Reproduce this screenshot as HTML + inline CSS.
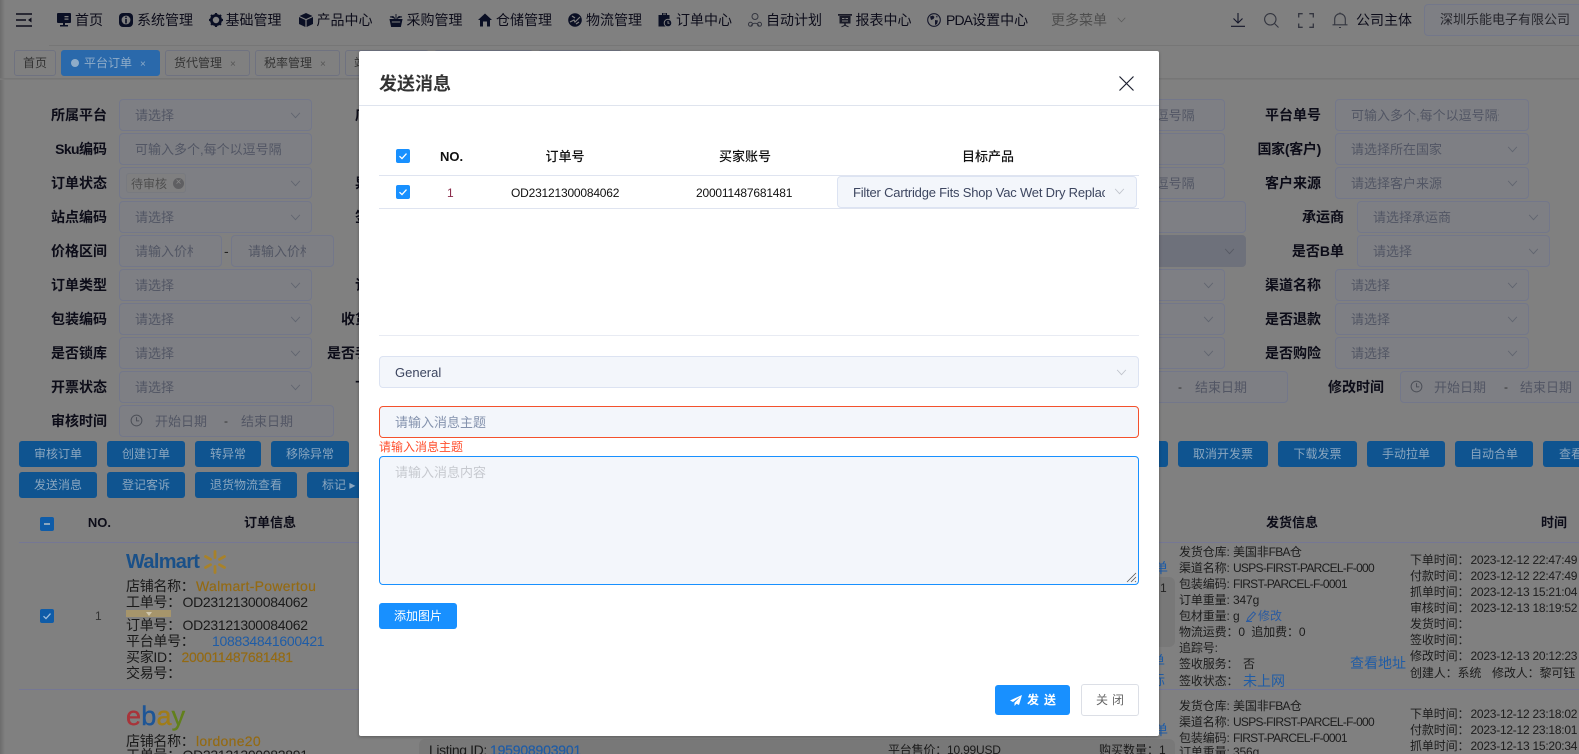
<!DOCTYPE html>
<html lang="zh-CN"><head><meta charset="utf-8"><title>发送消息</title>
<style>
html,body{margin:0;padding:0;width:1579px;height:754px;overflow:hidden;background:#808080}
body{position:relative;font-family:"Liberation Sans","Noto Sans CJK SC",sans-serif;font-size:14px;color:#111}
.t{position:absolute;white-space:nowrap;line-height:20px;height:20px}
.n{color:#0c0c1a;font-size:14px}
.ic{position:absolute;overflow:visible}
.i{position:absolute;box-sizing:border-box;height:32px;border:1px solid #73778a;border-radius:4px;background:#7e7f84}
.l{position:absolute;white-space:nowrap;line-height:20px;font-weight:700;color:#0c0c18;text-align:right;width:100px}
.p{position:absolute;white-space:nowrap;line-height:20px;font-size:13px;color:#525664;overflow:hidden;margin-top:1px}
.b{position:absolute;box-sizing:border-box;height:26px;line-height:26px;background:#0f5490;border-radius:3px;color:#8aa6bf;font-size:12px;text-align:center;white-space:nowrap;overflow:hidden}
.tab{position:absolute;box-sizing:border-box;top:50px;height:26px;line-height:24px;border:1px solid #6f7280;border-radius:3px;font-size:12px;color:#333;white-space:nowrap;overflow:hidden}
.x{position:absolute;top:2px;font-size:10px;color:#555}
.s{font-size:12px;letter-spacing:-.12px;color:#1c1c1c}
.v{letter-spacing:-.7px}
.d{position:absolute;left:60.500px;letter-spacing:-.25px}
.o{font-size:14px;letter-spacing:-.3px;color:#1a1a1a}
.g{color:#946a12;-webkit-text-stroke:.15px #946a12}.u{color:#1f5ca6}
#m{position:absolute;left:359px;top:51px;width:800px;height:685px;background:#fff;border-radius:2px;z-index:5;box-shadow:0 1px 3px rgba(0,0,0,.3)}
#m .t{color:#111}
.cb{position:absolute;width:14px;height:14px;background:#1890ff;border-radius:2px}
.f{position:absolute;box-sizing:border-box;background:#f3f6fb;border:1px solid #dce3f2;border-radius:4px}
</style></head><body>
<svg width="0" height="0" style="position:absolute"><defs>
<symbol id="ch" viewBox="0 0 12 8"><polyline points="1,1 6,6.5 11,1" fill="none" stroke="currentColor" stroke-width="1"/></symbol>
<symbol id="ck" viewBox="0 0 14 14"><polyline points="3.5,7.2 6,9.6 10.5,4.6" fill="none" stroke="#fff" stroke-width="1.3"/></symbol>
<symbol id="cl" viewBox="0 0 14 14"><circle cx="7" cy="7" r="5.8" fill="none" stroke="#4d5058" stroke-width="1.1"/><polyline points="7,3.4 7,7.4 10,7.4" fill="none" stroke="#4d5058" stroke-width="1.1"/></symbol>
</defs></svg>
<div style="position:absolute;left:0;top:0;width:5px;height:754px;background:linear-gradient(90deg,#6c6c6c,#808080)"></div>

<!-- top nav -->
<svg class="ic" style="left:16px;top:13px" width="16" height="14" viewBox="0 0 16 14"><path d="M0 1h16M0 7h10M0 13h16" stroke="#0c0c1a" stroke-width="1.6"/><path d="M15.5 4.5v5L12 7z" fill="#0c0c1a"/></svg>
<svg class="ic" style="left:57px;top:13px" width="14" height="14" viewBox="0 0 14 14"><path d="M1 0h12a1 1 0 0 1 1 1v8a1 1 0 0 1-1 1H8v2h3v1.5H3V12h3v-2H1a1 1 0 0 1-1-1V1a1 1 0 0 1 1-1z" fill="#0a0f24"/><path d="M7.5 3h4v1.2h-4zM7.5 5.5h4v1.2h-4z" fill="#808080"/></svg>
<div class="t n" style="left:75px;top:10px">首页</div>
<svg class="ic" style="left:119px;top:13px" width="14" height="14" viewBox="0 0 14 14"><rect width="14" height="14" rx="4" fill="#0a0f24"/><circle cx="7" cy="7" r="4.4" fill="#808080"/><path d="M6.2 3.6h1.6v1.5H6.200zM6.200 6h1.6v4.400H6.200z" fill="#0a0f24"/></svg>
<div class="t n" style="left:137px;top:10px">系统管理</div>
<svg class="ic" style="left:209px;top:13px" width="14" height="14" viewBox="0 0 14 14"><circle cx="7" cy="7" r="4.600" fill="none" stroke="#0a0f24" stroke-width="2.800"/><path d="M7 0v14M0 7h14M2 2l10 10M12 2L2 12" stroke="#0a0f24" stroke-width="2.200" stroke-dasharray="2.600 8.800 2.600"/></svg>
<div class="t n" style="left:225.500px;top:10px">基础管理</div>
<svg class="ic" style="left:299px;top:13px" width="14" height="14" viewBox="0 0 14 14"><path d="M7 0l6.500 3L7 6 .5 3zM0 4l6.400 3v7L0 11zM14 4L7.600 7v7l6.400-3z" fill="#0a0f24"/></svg>
<div class="t n" style="left:316.500px;top:10px">产品中心</div>
<svg class="ic" style="left:389px;top:13px" width="14" height="14" viewBox="0 0 14 14"><path d="M1 6.500h12l-1.500 7h-9zM1 4l3-.5L6.500 6M13 4l-3-.5L7.500 6M7 1v4" fill="#0a0f24" stroke="#0a0f24" stroke-width=".9"/><path d="M2.800 9h8.400" stroke="#808080"/></svg>
<div class="t n" style="left:406.500px;top:10px">采购管理</div>
<svg class="ic" style="left:478px;top:13px" width="14" height="14" viewBox="0 0 14 14"><path d="M7 .5L14 7h-2v6.500H2V7H0z" fill="#0a0f24"/><path d="M5 8.500h4v5H5z" fill="#808080"/></svg>
<div class="t n" style="left:496px;top:10px">仓储管理</div>
<svg class="ic" style="left:568px;top:13px" width="14" height="14" viewBox="0 0 14 14"><circle cx="7" cy="7" r="6.800" fill="#0a0f24"/><path d="M2 9l4-2 1 2 5-5M4 3l3 2M8 11l3-2" stroke="#808080" stroke-width="1.200" fill="none"/></svg>
<div class="t n" style="left:586px;top:10px">物流管理</div>
<svg class="ic" style="left:658px;top:13px" width="14" height="14" viewBox="0 0 14 14"><path d="M4 0h5v2h2.500v5H8v6.500H.5V2H4z" fill="#0a0f24"/><circle cx="10" cy="10" r="3.800" fill="#0a0f24" stroke="#808080"/><path d="M10 8v2.200h1.500" stroke="#808080" fill="none"/><path d="M5 1.100h3" stroke="#808080"/></svg>
<div class="t n" style="left:676px;top:10px">订单中心</div>
<svg class="ic" style="left:748px;top:13px" width="14" height="14" viewBox="0 0 14 14" fill="none" stroke="#33353f"><circle cx="7" cy="3.500" r="3"/><path d="M3 13a4.500 5 0 0 1 8 0"/><circle cx="2.500" cy="11.300" r="2"/><circle cx="11.500" cy="11.300" r="2"/></svg>
<div class="t n" style="left:766px;top:10px">自动计划</div>
<svg class="ic" style="left:838px;top:13px" width="14" height="14" viewBox="0 0 14 14"><path d="M0 1h14v1.800H0zM1.500 3h11v7.500h-11zM6.200 10.500h1.600V12l3 1.500-.5.700L7 12.900l-3.300 1.300-.5-.7 3-1.500z" fill="#1a1b28"/><path d="M4 5.500h2.500M7.500 5.500H10M4 8h6" stroke="#808080"/></svg>
<div class="t n" style="left:855.500px;top:10px">报表中心</div>
<svg class="ic" style="left:927px;top:13px" width="14" height="14" viewBox="0 0 14 14"><circle cx="7" cy="7" r="6.300" fill="none" stroke="#14162a" stroke-width="1.100"/><path d="M3 3.500l3-1 1.500 1.500-1 2-2.500 1zM8 7l3 .5-1 3.500-2 1zM9 2.500l2 1.500-1.500.5z" fill="#14162a"/></svg>
<div class="t n" style="left:946px;top:10px"><span style="letter-spacing:-.9px">PDA</span>设置中心</div>
<div class="t" style="left:1051px;top:10px;color:#4e4e4e">更多菜单</div>
<svg class="ic" style="left:1117px;top:17px;color:#5a5a5a" width="9" height="6"><use href="#ch"/></svg>
<svg class="ic" style="left:1231px;top:13px" width="14" height="14" viewBox="0 0 14 14" fill="none" stroke="#14162a" stroke-width="1.100"><path d="M7 0v9.500M2.500 5.500L7 10l4.500-4.500M0 13.300h14"/></svg>
<svg class="ic" style="left:1264px;top:13px" width="15" height="15" viewBox="0 0 15 15" fill="none" stroke="#33353f" stroke-width="1.100"><circle cx="6.300" cy="6.300" r="5.700"/><path d="M10.500 10.500l4 4"/></svg>
<svg class="ic" style="left:1298px;top:13px" width="16" height="15" viewBox="0 0 16 15" fill="none" stroke="#33353f" stroke-width="1.300"><path d="M0.700 4.500V.7h4M11.300.7h4v3.800M15.300 10.500v3.800h-4M4.700 14.300h-4v-3.800"/></svg>
<svg class="ic" style="left:1332px;top:12px" width="16" height="16" viewBox="0 0 16 16" fill="none" stroke="#33353f" stroke-width="1.100"><path d="M.5 12.800h15M2.700 12.800V7a5.300 5.300 0 0 1 10.600 0v5.800M8 .5v1.300M7 15.500h2"/></svg>
<div class="t" style="left:1356px;top:10px;color:#0c0c1a">公司主体</div>
<div class="i" style="left:1424px;top:4px;width:171px"></div>
<div class="t" style="left:1440px;top:10px;font-size:13px;color:#26262c">深圳乐能电子有限公司</div>
<div style="position:absolute;left:49px;right:0;top:45px;height:1px;background:#767676"></div>

<!-- tabs -->
<div class="tab" style="left:14px;width:42px;text-align:center">首页</div>
<div class="tab" style="left:61px;width:99px;background:#2a69ab;border-color:#2a69ab;color:#8facc8"><span style="position:absolute;left:9px;top:8px;width:8px;height:8px;background:#8facc8;border-radius:50%"></span><span style="position:absolute;left:22px">平台订单</span><span class="x" style="left:78px;color:#8facc8">×</span></div>
<div class="tab" style="left:165px;width:85px"><span style="position:absolute;left:8px">货代管理</span><span class="x" style="left:64px">×</span></div>
<div class="tab" style="left:255px;width:85px"><span style="position:absolute;left:8px">税率管理</span><span class="x" style="left:64px">×</span></div>
<div class="tab" style="left:345px;width:84px"><span style="position:absolute;left:8px">站点管理</span></div>
<div class="tab" style="left:434px;width:99px"></div>
<div class="tab" style="left:538px;width:84px"></div>
<div style="position:absolute;left:0;right:0;top:78px;height:2px;background:linear-gradient(#747474,#7c7c7c)"></div>

<!-- form column 1 -->
<div class="l" style="left:7px;top:105px">所属平台</div><div class="i" style="left:119px;top:99px;width:193px"></div><div class="p" style="left:135px;top:105px">请选择</div><svg class="ic" style="left:290px;top:112px;color:#60646f" width="11" height="7"><use href="#ch"/></svg>
<div class="l" style="left:7px;top:139px"><span style="letter-spacing:-.6px">Sku</span>编码</div><div class="i" style="left:119px;top:133px;width:193px"></div><div class="p" style="left:135px;top:139px;width:147px">可输入多个,每个以逗号隔开</div>
<div class="l" style="left:7px;top:173px">订单状态</div><div class="i" style="left:119px;top:167px;width:193px"></div><div style="position:absolute;left:126px;top:173px;width:60px;height:20px;box-sizing:border-box;border:1px solid #787a80;border-radius:3px;background:#7f7f80"></div><div class="p" style="left:131px;top:173px;font-size:12px;color:#4f4f4f">待审核</div><div style="position:absolute;left:173px;top:178px;width:11px;height:11px;border-radius:50%;background:#5f5f62;color:#8a8a8a;font-size:10px;line-height:10px;text-align:center">×</div><svg class="ic" style="left:290px;top:180px;color:#60646f" width="11" height="7"><use href="#ch"/></svg>
<div class="l" style="left:7px;top:207px">站点编码</div><div class="i" style="left:119px;top:201px;width:193px"></div><div class="p" style="left:135px;top:207px">请选择</div><svg class="ic" style="left:290px;top:214px;color:#60646f" width="11" height="7"><use href="#ch"/></svg>
<div class="l" style="left:7px;top:241px">价格区间</div><div class="i" style="left:119px;top:235px;width:103px"></div><div class="p" style="left:135px;top:241px;width:58px">请输入价格</div><div class="t" style="left:224px;top:241px;color:#222">-</div><div class="i" style="left:231px;top:235px;width:103px"></div><div class="p" style="left:248px;top:241px;width:58px">请输入价格</div>
<div class="l" style="left:7px;top:275px">订单类型</div><div class="i" style="left:119px;top:269px;width:193px"></div><div class="p" style="left:135px;top:275px">请选择</div><svg class="ic" style="left:290px;top:282px;color:#60646f" width="11" height="7"><use href="#ch"/></svg>
<div class="l" style="left:7px;top:309px">包装编码</div><div class="i" style="left:119px;top:303px;width:193px"></div><div class="p" style="left:135px;top:309px">请选择</div><svg class="ic" style="left:290px;top:316px;color:#60646f" width="11" height="7"><use href="#ch"/></svg>
<div class="l" style="left:7px;top:343px">是否锁库</div><div class="i" style="left:119px;top:337px;width:193px"></div><div class="p" style="left:135px;top:343px">请选择</div><svg class="ic" style="left:290px;top:350px;color:#60646f" width="11" height="7"><use href="#ch"/></svg>
<div class="l" style="left:7px;top:377px">开票状态</div><div class="i" style="left:119px;top:371px;width:193px"></div><div class="p" style="left:135px;top:377px">请选择</div><svg class="ic" style="left:290px;top:384px;color:#60646f" width="11" height="7"><use href="#ch"/></svg>
<div class="l" style="left:7px;top:411px">审核时间</div><div class="i" style="left:119px;top:405px;width:215px"></div><svg class="ic" style="left:130px;top:414px" width="13" height="13"><use href="#cl"/></svg><div class="p" style="left:155px;top:411px">开始日期</div><div class="t" style="left:224px;top:411px;color:#333;font-size:12px">-</div><div class="p" style="left:241px;top:411px">结束日期</div>

<!-- column 2 label fragments -->
<div class="l" style="left:311px;top:105px">店铺名称</div>
<div class="l" style="left:311px;top:173px">异常类型</div>
<div class="l" style="left:311px;top:207px">签收状态</div>
<div class="l" style="left:311px;top:275px">订单来源</div>
<div class="l" style="left:311px;top:309px">收货人名称</div>
<div class="l" style="left:311px;top:343px">是否手动拉单</div>
<div class="l" style="left:311px;top:377px">下单时间</div>

<!-- column 3 -->
<div class="i" style="left:1100px;top:99px;width:125px"></div><div class="p" style="left:1048px;top:105px;width:147px">可输入多个,每个以逗号隔开</div>
<div class="i" style="left:1100px;top:133px;width:125px"></div>
<div class="i" style="left:1100px;top:167px;width:125px"></div><div class="p" style="left:1048px;top:173px;width:147px">可输入多个,每个以逗号隔开</div>
<div class="i" style="left:1100px;top:201px;width:146px"></div>
<div class="i" style="left:1100px;top:235px;width:146px;background:#6e717b;border-color:#6e717b"></div><svg class="ic" style="left:1224px;top:248px;color:#565963" width="11" height="7"><use href="#ch"/></svg>
<div class="i" style="left:1100px;top:269px;width:125px"></div><svg class="ic" style="left:1203px;top:282px;color:#60646f" width="11" height="7"><use href="#ch"/></svg>
<div class="i" style="left:1100px;top:303px;width:125px"></div><svg class="ic" style="left:1203px;top:316px;color:#60646f" width="11" height="7"><use href="#ch"/></svg>
<div class="i" style="left:1100px;top:337px;width:125px"></div><svg class="ic" style="left:1203px;top:350px;color:#60646f" width="11" height="7"><use href="#ch"/></svg>
<div class="i" style="left:1100px;top:371px;width:188px"></div><div class="t" style="left:1178px;top:377px;color:#333;font-size:12px">-</div><div class="p" style="left:1195px;top:377px">结束日期</div>

<!-- column 4 -->
<div class="l" style="left:1221px;top:105px">平台单号</div><div class="i" style="left:1335px;top:99px;width:194px"></div><div class="p" style="left:1351px;top:105px;width:148px">可输入多个,每个以逗号隔开</div>
<div class="l" style="left:1221px;top:139px"><span style="letter-spacing:-.3px">国家(客户)</span></div><div class="i" style="left:1335px;top:133px;width:194px"></div><div class="p" style="left:1351px;top:139px">请选择所在国家</div><svg class="ic" style="left:1507px;top:146px;color:#60646f" width="11" height="7"><use href="#ch"/></svg>
<div class="l" style="left:1221px;top:173px">客户来源</div><div class="i" style="left:1335px;top:167px;width:194px"></div><div class="p" style="left:1351px;top:173px">请选择客户来源</div><svg class="ic" style="left:1507px;top:180px;color:#60646f" width="11" height="7"><use href="#ch"/></svg>
<div class="l" style="left:1244px;top:207px">承运商</div><div class="i" style="left:1357px;top:201px;width:193px"></div><div class="p" style="left:1373px;top:207px">请选择承运商</div><svg class="ic" style="left:1528px;top:214px;color:#60646f" width="11" height="7"><use href="#ch"/></svg>
<div class="l" style="left:1244px;top:241px">是否B单</div><div class="i" style="left:1357px;top:235px;width:193px"></div><div class="p" style="left:1373px;top:241px">请选择</div><svg class="ic" style="left:1528px;top:248px;color:#60646f" width="11" height="7"><use href="#ch"/></svg>
<div class="l" style="left:1221px;top:275px">渠道名称</div><div class="i" style="left:1335px;top:269px;width:194px"></div><div class="p" style="left:1351px;top:275px">请选择</div><svg class="ic" style="left:1507px;top:282px;color:#60646f" width="11" height="7"><use href="#ch"/></svg>
<div class="l" style="left:1221px;top:309px">是否退款</div><div class="i" style="left:1335px;top:303px;width:194px"></div><div class="p" style="left:1351px;top:309px">请选择</div><svg class="ic" style="left:1507px;top:316px;color:#60646f" width="11" height="7"><use href="#ch"/></svg>
<div class="l" style="left:1221px;top:343px">是否购险</div><div class="i" style="left:1335px;top:337px;width:194px"></div><div class="p" style="left:1351px;top:343px">请选择</div><svg class="ic" style="left:1507px;top:350px;color:#60646f" width="11" height="7"><use href="#ch"/></svg>
<div class="l" style="left:1284px;top:377px">修改时间</div><div class="i" style="left:1400px;top:371px;width:215px"></div><svg class="ic" style="left:1410px;top:380px" width="13" height="13"><use href="#cl"/></svg><div class="p" style="left:1434px;top:377px">开始日期</div><div class="t" style="left:1504px;top:377px;color:#333;font-size:12px">-</div><div class="p" style="left:1520px;top:377px">结束日期</div>

<!-- buttons -->
<div class="b" style="left:19px;top:441px;width:78px">审核订单</div>
<div class="b" style="left:107px;top:441px;width:78px">创建订单</div>
<div class="b" style="left:195px;top:441px;width:66px">转异常</div>
<div class="b" style="left:271px;top:441px;width:78px">移除异常</div>
<div class="b" style="left:1090px;top:441px;width:78px">开发票</div>
<div class="b" style="left:1178px;top:441px;width:90px">取消开发票</div>
<div class="b" style="left:1278px;top:441px;width:79px">下载发票</div>
<div class="b" style="left:1367px;top:441px;width:78px">手动拉单</div>
<div class="b" style="left:1455px;top:441px;width:78px">自动合单</div>
<div class="b" style="left:1543px;top:441px;width:78px;text-align:left;padding-left:16px">查看日志</div>
<div class="b" style="left:19px;top:472px;width:78px">发送消息</div>
<div class="b" style="left:107px;top:472px;width:78px">登记客诉</div>
<div class="b" style="left:195px;top:472px;width:102px">退货物流查看</div>
<div class="b" style="left:307px;top:472px;width:60px;text-align:left;padding-left:15px">标记 ▸</div>

<!-- table -->
<div class="cb" style="left:40px;top:517px;background:#0f5ca8"><div style="position:absolute;left:4px;top:6px;width:6px;height:2px;background:#8aa6bf"></div></div>
<div class="l" style="left:50px;top:513px;width:61px;font-size:13px">NO.</div>
<div class="l" style="left:196px;top:513px;font-size:13px">订单信息</div>
<div class="l" style="left:1218px;top:513px;font-size:13px">发货信息</div>
<div class="l" style="left:1467px;top:513px;font-size:13px">时间</div>
<div style="position:absolute;left:19px;right:0;top:542px;height:1px;background:#757794"></div>
<div style="position:absolute;left:19px;right:0;top:689px;height:1px;background:#757794"></div>

<div class="cb" style="left:40px;top:609px;background:#0f5ca8"><svg width="14" height="14" style="opacity:.6"><use href="#ck"/></svg></div>
<div class="t" style="left:95px;top:606px;font-size:12px;color:#333">1</div>

<div class="t" style="left:126px;top:552px;font-size:20px;font-weight:700;letter-spacing:-.7px;color:#1a5088">Walmart</div>
<svg class="ic" style="left:203px;top:550px" width="24" height="24" viewBox="0 0 24 24"><g stroke="#a8822a" stroke-width="2.800" stroke-linecap="round"><path d="M12 1.500v6M12 16.500v6M2.500 6.500l5 2.800M16.500 14.700l5 2.800M2.500 17.500l5-2.800M16.500 9.300l5-2.800"/></g></svg>
<div class="t o" style="left:126px;top:576px">店铺名称：<span class="g" style="position:absolute;left:70px;letter-spacing:.3px">Walmart-Powertou</span></div>
<div class="t o" style="left:126px;top:592px">工单号：<span style="position:absolute;left:56.500px">OD23121300084062</span></div>
<div style="position:absolute;left:126px;top:610px;width:45px;height:7px;background:#a6956b"></div>
<div style="position:absolute;left:146px;top:612px;border:3px solid transparent;border-top:4px solid #cfc6ae"></div>
<div class="t o" style="left:126px;top:615px">订单号：<span style="position:absolute;left:56.500px">OD23121300084062</span></div>
<div class="t o" style="left:126px;top:631px">平台单号：<span class="u" style="position:absolute;left:86px">108834841600421</span></div>
<div class="t o" style="left:126px;top:647px">买家ID：<span class="g" style="position:absolute;left:55.500px">200011487681481</span></div>
<div class="t o" style="left:126px;top:663px">交易号：</div>

<div class="t" style="left:126px;top:705px;font-size:27px;line-height:22px;height:24px;letter-spacing:.2px;-webkit-text-stroke:.4px"><span style="color:#a8343a">e</span><span style="color:#1d5596">b</span><span style="color:#a07c18">a</span><span style="color:#62801c">y</span></div>
<div class="t o" style="left:126px;top:731px">店铺名称：<span class="g" style="position:absolute;left:70px;letter-spacing:.3px">lordone20</span></div>
<div class="t o" style="left:126px;top:745px">工单号：<span style="position:absolute;left:56.500px">OD23121300082891</span></div>

<div style="position:absolute;left:419px;top:739px;width:740px;height:20px;background:#787878;border-radius:6px 0 0 0"></div>
<div class="t o" style="left:429px;top:740px;z-index:1;letter-spacing:-.4px">Listing ID:<span class="u" style="position:absolute;left:61px;letter-spacing:-.2px;-webkit-text-stroke:.2px #1f5ca6">195908903901</span></div>

<!-- right fragments -->
<div class="t u" style="left:1140px;top:558px">下单</div>
<div style="position:absolute;left:1100px;top:577px;width:75px;height:70px;background:#787878;border-radius:6px"></div>
<div class="t" style="left:1160px;top:578px;color:#222;font-size:12px">1</div>
<div class="t u" style="left:1137px;top:651px">拉单</div>
<div class="t u" style="left:1151px;top:670px">标</div>
<div class="t u" style="left:1140px;top:720px">下单</div>
<div style="position:absolute;left:1100px;top:739px;width:75px;height:20px;background:#787878;border-radius:6px 6px 0 0"></div>
<div class="t o" style="left:888px;top:740px;letter-spacing:-.2px;font-size:12px;z-index:1">平台售价：10.99USD</div>
<div class="t o" style="left:1099px;top:740px;letter-spacing:0;font-size:12px;z-index:1">购买数量：1</div>

<!-- shipping -->
<div class="t s" style="left:1179px;top:542px">发货仓库: 美国非<span class="v">FBA</span>仓</div>
<div class="t s" style="left:1179px;top:558px">渠道名称: <span class="v">USPS-FIRST-PARCEL-F-000</span></div>
<div class="t s" style="left:1179px;top:574px">包装编码: <span class="v">FIRST-PARCEL-F-0001</span></div>
<div class="t s" style="left:1179px;top:590px">订单重量: 347g</div>
<div class="t s" style="left:1179px;top:606px">包材重量: g</div>
<svg class="ic" style="left:1246px;top:611px" width="11" height="11" viewBox="0 0 11 11" fill="none" stroke="#2c5ba0"><path d="M1 10l1-3 5.500-6 2 1.800-5.500 6z"/><path d="M0 10.500h6"/></svg>
<div class="t" style="left:1258px;top:606px;font-size:12px;color:#2c5ba0">修改</div>
<div class="t s" style="left:1179px;top:622px">物流运费：0 &nbsp;追加费：0</div>
<div class="t s" style="left:1179px;top:638px">追踪号:</div>
<div class="t s" style="left:1179px;top:654px">签收服务： <span style="position:absolute;left:64px">否</span></div>
<div class="t s" style="left:1179px;top:671px">签收状态：</div>
<div class="t u" style="left:1243px;top:671px">未上网</div>
<div class="t u" style="left:1350px;top:653px">查看地址</div>

<div class="t s" style="left:1179px;top:696px">发货仓库: 美国非<span class="v">FBA</span>仓</div>
<div class="t s" style="left:1179px;top:712px">渠道名称: <span class="v">USPS-FIRST-PARCEL-F-000</span></div>
<div class="t s" style="left:1179px;top:728px">包装编码: <span class="v">FIRST-PARCEL-F-0001</span></div>
<div class="t s" style="left:1179px;top:742px">订单重量: 356g</div>

<!-- times -->
<div class="t s" style="left:1410px;top:550px">下单时间：<span class="d">2023-12-12 22:47:49</span></div>
<div class="t s" style="left:1410px;top:566px">付款时间：<span class="d">2023-12-12 22:47:49</span></div>
<div class="t s" style="left:1410px;top:582px">抓单时间：<span class="d">2023-12-13 15:21:04</span></div>
<div class="t s" style="left:1410px;top:598px">审核时间：<span class="d">2023-12-13 18:19:52</span></div>
<div class="t s" style="left:1410px;top:614px">发货时间：</div>
<div class="t s" style="left:1410px;top:630px">签收时间：</div>
<div class="t s" style="left:1410px;top:646px">修改时间：<span class="d">2023-12-13 20:12:23</span></div>
<div class="t s" style="left:1410px;top:663px">创建人：系统<span style="position:absolute;left:82px">修改人：黎可钰</span></div>
<div class="t s" style="left:1410px;top:704px">下单时间：<span class="d">2023-12-12 23:18:02</span></div>
<div class="t s" style="left:1410px;top:720px">付款时间：<span class="d">2023-12-12 23:18:01</span></div>
<div class="t s" style="left:1410px;top:736px">抓单时间：<span class="d">2023-12-13 15:20:34</span></div>

<!-- modal -->
<div id="m">
<div class="t" style="left:20px;top:23px;font-size:18px;font-weight:700;color:#333!important">发送消息</div>
<svg class="ic" style="left:760px;top:25px" width="15" height="15" viewBox="0 0 15 15"><path d="M.5.5l14 14M14.500.5l-14 14" stroke="#1c2030" stroke-width="1.200"/></svg>
<div style="position:absolute;left:0;top:54px;width:800px;height:1px;background:#dfe4ee"></div>

<div class="cb" style="left:37px;top:98px"><svg width="14" height="14"><use href="#ck"/></svg></div>
<div class="t" style="left:81px;top:96px;font-weight:700;font-size:13px">NO.</div>
<div class="t" style="left:186px;top:96px;width:40px;text-align:center;font-weight:500;font-size:13px">订单号</div>
<div class="t" style="left:346px;top:96px;width:80px;text-align:center;font-weight:500;font-size:13px">买家账号</div>
<div class="t" style="left:589px;top:96px;width:80px;text-align:center;font-weight:500;font-size:13px">目标产品</div>
<div style="position:absolute;left:20px;top:124px;width:760px;height:1px;background:#dfe4f0"></div>
<div style="position:absolute;left:20px;top:157px;width:760px;height:1px;background:#dfe4f0"></div>
<div class="cb" style="left:37px;top:134px"><svg width="14" height="14"><use href="#ck"/></svg></div>
<div class="t" style="left:88px;top:132px;font-size:12px;color:#8a2a4a!important">1</div>
<div class="t" style="left:152px;top:132px;font-size:12px;letter-spacing:-.2px">OD23121300084062</div>
<div class="t" style="left:337px;top:132px;font-size:12px;letter-spacing:-.2px">200011487681481</div>
<div class="f" style="left:478px;top:125px;width:300px;height:32px"></div>
<div class="t" style="left:494px;top:132px;width:252px;overflow:hidden;font-size:13px;letter-spacing:-.2px;color:#3d4660!important">Filter Cartridge Fits Shop Vac Wet Dry Replacement</div>
<svg class="ic" style="left:755px;top:137px;color:#c0c4cc" width="11" height="7"><use href="#ch"/></svg>

<div style="position:absolute;left:20px;top:284px;width:760px;height:1px;background:#e8ebf3"></div>
<div class="f" style="left:20px;top:305px;width:760px;height:32px"></div>
<div class="t" style="left:36px;top:312px;font-size:13px;color:#3d4660!important">General</div>
<svg class="ic" style="left:757px;top:318px;color:#c0c4cc" width="11" height="7"><use href="#ch"/></svg>
<div class="f" style="left:20px;top:355px;width:760px;height:32px;border-color:#f4512c"></div>
<div class="t" style="left:36px;top:362px;font-size:13px;color:#8492ad!important">请输入消息主题</div>
<div class="t" style="left:20px;top:386px;font-size:12px;color:#ff4f2e!important">请输入消息主题</div>
<div class="f" style="left:20px;top:405px;width:760px;height:129px;border-color:#1890ff"></div>
<div class="t" style="left:36px;top:412px;font-size:13px;color:#c6c9cf!important">请输入消息内容</div>
<svg class="ic" style="left:767px;top:521px" width="11" height="11" viewBox="0 0 11 11"><path d="M1 10l9-9M5 10l5-5M9 10l1-1" stroke="#555" stroke-width=".8"/></svg>
<div style="position:absolute;left:20px;top:552px;width:78px;height:26px;line-height:26px;background:#1890ff;border-radius:3px;color:#fff;font-size:12px;text-align:center">添加图片</div>
<div style="position:absolute;left:636px;top:634px;width:75px;height:30px;background:#1890ff;border-radius:3px"></div>
<svg class="ic" style="left:651px;top:644px" width="12" height="11" viewBox="0 0 12 11"><path d="M12 0L0 5.500l3 1.500L10 2 4.500 7.800V11l2-2.300 2.500 1.300z" fill="#fff"/></svg>
<div class="t" style="left:668px;top:639px;font-size:12px;font-weight:700;letter-spacing:5px;color:#fff!important">发送</div>
<div style="position:absolute;left:722px;top:633px;width:58px;height:32px;box-sizing:border-box;border:1px solid #dcdfe6;border-radius:3px;background:#fff"></div>
<div class="t" style="left:737px;top:639px;font-size:12px;letter-spacing:4px;color:#666!important">关闭</div>
</div>
</body></html>
